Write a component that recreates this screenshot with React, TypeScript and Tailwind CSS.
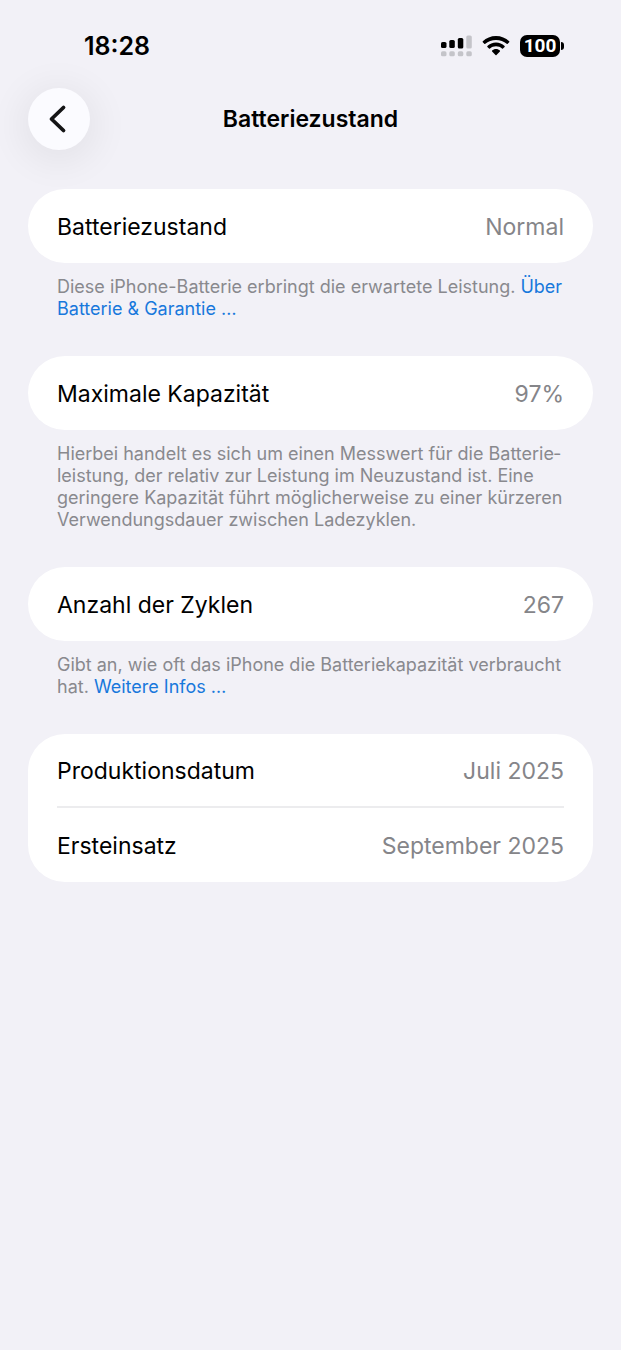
import type { ReactNode } from 'react';

type RowProps = { label: string; value: string };

function StatusBar() {
  return (
    <div className="flex items-center justify-between pl-[84px] pr-[57px] pt-8">
      <time className="text-[25px] leading-7 font-semibold">18:28</time>
      <div className="flex items-center gap-2.5">
        <svg className="w-8 h-[22px]" viewBox="0 0 32 22" role="img" aria-label="Mobilfunk">
          <rect x="1" y="7" width="5.5" height="6" rx="1.6" fill="#000" />
          <rect x="9.3" y="5" width="5.5" height="8" rx="1.6" fill="#000" />
          <rect x="17.8" y="3" width="5.5" height="10.5" rx="1.6" fill="#000" />
          <rect x="26.3" y="0.5" width="5.5" height="13" rx="1.6" fill="#c4c4c9" />
          <g fill="#c4c4c9">
            <rect x="1" y="16.3" width="5.5" height="5" rx="1.6" />
            <rect x="9.3" y="16.3" width="5.5" height="5" rx="1.6" />
            <rect x="17.8" y="16.3" width="5.5" height="5" rx="1.6" />
            <rect x="26.3" y="16.3" width="5.5" height="5" rx="1.6" />
          </g>
        </svg>
        <svg className="w-7 h-5" viewBox="0 0 28 20" role="img" aria-label="WLAN">
          <path d="M14 0C8.9 0 4.2 2 .8 5.3c-.3.3-.3.7 0 1l1.5 1.5c.3.3.7.3 1 0C6.1 5.2 9.9 3.9 14 3.900s7.900 1.300 10.700 3.900c.3.3.7.3 1 0l1.500-1.500c.3-.3.3-.7 0-1C23.800 2 19.100 0 14 0z" />
          <path d="M14 6.500c-3.300 0-6.300 1.300-8.600 3.400-.3.300-.3.700 0 1l1.600 1.600c.3.300.7.300 1 0 1.600-1.400 3.700-2.200 6-2.200s4.400.8 6 2.200c.3.300.7.300 1 0l1.600-1.600c.3-.3.3-.7 0-1-2.300-2.100-5.300-3.400-8.600-3.400z" />
          <path d="M14 13c-1.500 0-2.900.6-3.900 1.500-.3.300-.3.700 0 1l3.400 3.400c.3.300.7.300 1 0l3.400-3.400c.3-.3.3-.7 0-1-1-.9-2.400-1.500-3.900-1.500z" />
        </svg>
        <div className="flex items-center gap-px">
          <span className="flex h-[22px] w-10 items-center justify-center rounded-[7px] bg-black font-['Roboto',sans-serif] text-[19px] leading-[22px] font-bold text-white">
            100
          </span>
          <span className="h-2 w-[3px] rounded-r-full bg-black" />
        </div>
      </div>
    </div>
  );
}

function Row({ label, value }: RowProps) {
  return (
    <div className="flex h-[74px] items-center justify-between pt-0.5 text-[23px] leading-7">
      <dt className="text-black">{label}</dt>
      <dd className="text-[#858589]">{value}</dd>
    </div>
  );
}

function Section({ rows, children }: { rows: RowProps[]; children?: ReactNode }) {
  return (
    <section>
      <dl className="rounded-[37px] bg-white px-[29px] divide-y-2 divide-[#ececee]">
        {rows.map((row) => (
          <Row key={row.label} label={row.label} value={row.value} />
        ))}
      </dl>
      {children && (
        <p className="pt-[13px] pb-9 pl-[29px] pr-6 text-[18px] leading-[22px] text-[#89898e]">{children}</p>
      )}
    </section>
  );
}

export default function App() {
  return (
    <div className="min-h-screen bg-[#f2f1f7] font-['Inter',sans-serif] text-black">
      <StatusBar />

      <header className="grid grid-cols-[62px_1fr_62px] items-center px-7 pt-7">
        <button
          type="button"
          aria-label="Zurück"
          className="flex h-[62px] w-[62px] items-center justify-center rounded-full bg-[#fbfbff] shadow-[0_6px_36px_8px_rgba(0,0,0,0.06)]"
        >
          <svg
            className="w-8 h-8"
            viewBox="0 0 32 32"
            fill="none"
            stroke="#141416"
            strokeWidth="3.8"
            strokeLinecap="round"
            strokeLinejoin="round"
          >
            <path d="M20.500 4.500L8.500 16L20.500 27.500" />
          </svg>
        </button>
        <h1 className="text-center text-[23px] leading-7 font-semibold">Batteriezustand</h1>
      </header>

      <main className="px-7 pt-[39px]">
        <Section rows={[{ label: 'Batteriezustand', value: 'Normal' }]}>
          Diese iPhone-Batterie erbringt die erwartete Leistung.{' '}
          <a href="#garantie" className="text-[#1878dc]">
            Über Batterie &amp; Garantie …
          </a>
        </Section>
        <Section rows={[{ label: 'Maximale Kapazität', value: '97%' }]}>
          Hierbei handelt es sich um einen Messwert für die Batterie&shy;leistung, der relativ zur Leistung im
          Neuzustand ist. Eine geringere Kapazität führt möglicherweise zu einer kürzeren Verwendungsdauer zwischen
          Ladezyklen.
        </Section>
        <Section rows={[{ label: 'Anzahl der Zyklen', value: '267' }]}>
          Gibt an, wie oft das iPhone die Batteriekapazität verbraucht hat.{' '}
          <a href="#zyklen" className="text-[#1878dc]">
            Weitere Infos …
          </a>
        </Section>
        <Section
          rows={[
            { label: 'Produktionsdatum', value: 'Juli 2025' },
            { label: 'Ersteinsatz', value: 'September 2025' },
          ]}
        />
      </main>
    </div>
  );
}
